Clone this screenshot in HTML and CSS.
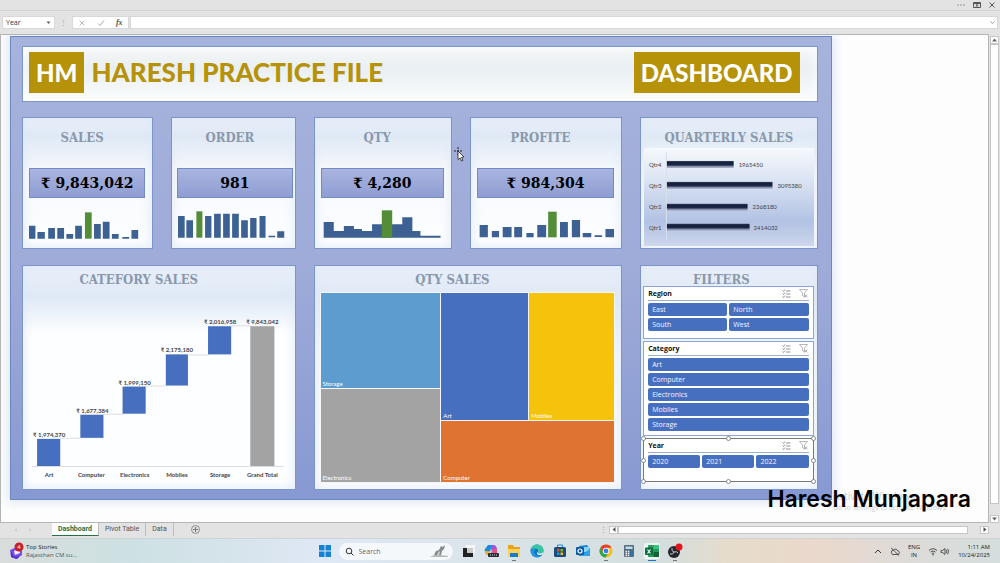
FILE: index.html
```html
<!DOCTYPE html>
<html lang="en">
<head>
<meta charset="utf-8">
<title>Dashboard</title>
<link rel="stylesheet" href="styles.css">
</head>
<body>
<svg width="0" height="0" class="defs" aria-hidden="true">
  <defs>
    <linearGradient id="qbar" x1="0" y1="0" x2="0" y2="1">
      <stop offset="0" stop-color="#4a566c"/><stop offset=".15" stop-color="#161f3b"/><stop offset=".6" stop-color="#1c2646"/><stop offset=".75" stop-color="#7c86a0"/><stop offset="1" stop-color="#a9b2c8"/>
    </linearGradient>
    <symbol id="multi" viewBox="0 0 9 9"><path d="M.5 1.5l1 1L3 .5M.5 4.5l1 1L3 3.500M.5 7.500l1 1L3 6.500M4 2h4.500M4 5h4.500M4 8h4.500" fill="none" stroke="#777" stroke-width=".8"/></symbol>
    <symbol id="clear" viewBox="0 0 9 9"><path d="M.5.5h8L5.500 4v4L3.500 6.500V4zM5.500 5.500l3 3M8.500 5.500l-3 3" fill="none" stroke="#999" stroke-width=".7"/></symbol>
  </defs>
</svg>

<header class="titlebar">
  <button class="icon-btn" aria-label="More"><svg width="10" height="8" viewBox="0 0 10 8"><path d="M1 4h2M4 4h2M7 4h2" stroke="#999"/></svg></button>
  <button class="icon-btn" aria-label="Ribbon display"><svg width="8" height="8" viewBox="0 0 8 8"><path d="M.5 1.500h7v5h-7zM.5 2.500h7M4 6V3.500M2.800 4.700L4 3.500l1.200 1.200" fill="none" stroke="#555"/></svg></button>
  <button class="icon-btn" aria-label="Close"><svg width="8" height="8" viewBox="0 0 8 8"><path d="M1.500 1.500l5 5M6.500 1.500l-5 5" stroke="#555"/></svg></button>
</header>

<div class="formula-row">
  <div class="name-box"><input aria-label="Name box" value="Year"><svg width="5" height="4" viewBox="0 0 5 4"><path d="M.5.5h4L2.500 3z" fill="#666"/></svg></div>
  <span class="grip">⋮</span>
  <div class="formula-tools">
    <button class="icon-btn" aria-label="Cancel"><svg width="8" height="8" viewBox="0 0 8 8"><path d="M1.500 1.500l5 5M6.500 1.500l-5 5" stroke="#bbb"/></svg></button>
    <button class="icon-btn" aria-label="Enter"><svg width="8" height="8" viewBox="0 0 8 8"><path d="M1 4.500l2 2L7 1.500" fill="none" stroke="#aaa"/></svg></button>
    <button class="icon-btn fx" aria-label="Insert function">fx</button>
  </div>
  <div class="formula"><input aria-label="Formula"><svg width="5" height="4" viewBox="0 0 5 4"><path d="M.5.5l2 2 2-2" fill="none" stroke="#999"/></svg></div>
</div>

<div class="workspace">
  <main class="sheet">
    <div class="board">
      <section class="banner">
        <span class="badge">HM</span>
        <h1>HARESH PRACTICE FILE</h1>
        <span class="badge badge-right">DASHBOARD</span>
      </section>

      <section class="card kpi">
        <h2>SALES</h2>
        <p class="value">₹ 9,843,042</p>
        <svg class="spark" viewBox="90 300 345 87" preserveAspectRatio="none">
          <path class="bar" d="M90 347h19v39h-19zM115 366h22v20h-22zM147 354h20v32h-20zM174 354h20v32h-20zM201 372h20v14h-20zM227 347h20v39h-20zM283 342h20v44h-20zM309 335h20v51h-20zM336 372h20v14h-20zM367 381h20v5h-20zM394 360h20v26h-20z"/>
          <path class="bar-top" d="M256 307h20v79h-20z"/>
        </svg>
      </section>
      <section class="card kpi kpi-order">
        <h2>ORDER</h2>
        <p class="value">981</p>
        <svg class="spark" viewBox="534 300 345 87" preserveAspectRatio="none">
          <path class="bar" d="M537 318h20v65h-20zM562 331h20v52h-20zM618 318h19v65h-19zM645 311h20v72h-20zM672 311h20v72h-20zM699 311h20v72h-20zM726 331h20v52h-20zM753 324h19v59h-19zM781 318h18v65h-18zM808 377h20v5h-20zM834 364h21v19h-21z"/>
          <path class="bar-top" d="M592 304h18v79h-18z"/>
        </svg>
      </section>
      <section class="card kpi">
        <h2>QTY</h2>
        <p class="value">₹ 4,280</p>
        <svg class="spark" viewBox="61 300 367 87" preserveAspectRatio="none">
          <path class="bar" d="M69 383V336h30v27h30v-15h30v9h24v6h30v-20h90v-21h30v41h24v14h60v6z"/>
          <path class="bar-top" d="M242 301h31v82h-31z"/>
        </svg>
      </section>
      <section class="card kpi">
        <h2>PROFITE</h2>
        <p class="value">₹ 984,304</p>
        <svg class="spark" viewBox="528 300 417 87" preserveAspectRatio="none">
          <path class="bar" d="M536 345h25v37h-25zM573 363h22v19h-22zM606 351h27v31h-27zM641 351h24v31h-24zM678 369h22v13h-22zM711 345h27v37h-27zM780 336h24v46h-24zM816 330h25v52h-25zM849 369h26v13h-26zM885 376h23v5h-23zM918 357h27v25h-27z"/>
          <path class="bar-top" d="M744 305h26v77h-26z"/>
        </svg>
      </section>
      <section class="card quarterly">
        <h2>QUARTERLY SALES</h2>
        <svg class="quarter-chart" viewBox="644 148 170 98">
          <path d="M666.500 152v88" stroke="#d8dfec"/>
          <g fill="url(#qbar)">
            <rect x="667" y="161" width="67" height="7"/><rect x="667" y="182" width="106" height="7"/><rect x="667" y="204" width="81" height="7"/><rect x="667" y="224" width="83" height="7"/>
          </g>
          <g class="tick">
            <text x="649" y="167">Qtr4</text><text x="649" y="188">Qtr3</text><text x="649" y="209">Qtr2</text><text x="649" y="230">Qtr1</text>
            <text x="739" y="167">1965450</text><text x="778" y="188">3095380</text><text x="753" y="209">2368180</text><text x="754" y="230">2414032</text>
          </g>
        </svg>
      </section>

      <section class="card category">
        <h2>CATEFORY SALES</h2>
        <svg class="waterfall" viewBox="24 286 270 202">
          <path d="M61 437.500h20M104 413.500h20M146 385.500h20M189 354.500h20M231 325.500h20M33 465.500h250" stroke="#ddd"/>
          <g fill="#466fbf">
            <rect x="38" y="438" width="23" height="27"/><rect x="81" y="414" width="23" height="23"/><rect x="123" y="386" width="23" height="27"/><rect x="166" y="354" width="22" height="31"/><rect x="208" y="326" width="23" height="28"/>
          </g>
          <rect x="250" y="326" width="24" height="139" fill="#a3a3a3"/>
          <g class="data-label">
            <text x="50" y="436">₹ 1,974,370</text><text x="93" y="412">₹ 1,677,384</text><text x="135" y="384">₹ 1,999,150</text><text x="177" y="352">₹ 2,175,180</text><text x="220" y="324">₹ 2,016,958</text><text x="262" y="324">₹ 9,843,042</text>
            <text x="50" y="476">Art</text><text x="92" y="476">Computer</text><text x="135" y="476">Electronics</text><text x="177" y="476">Mobiles</text><text x="220" y="476">Storage</text><text x="262" y="476">Grand Total</text>
          </g>
        </svg>
      </section>

      <section class="card qty">
        <h2>QTY SALES</h2>
        <div class="treemap">
          <div class="tile storage">Storage</div>
          <div class="tile art">Art</div>
          <div class="tile mobiles">Mobiles</div>
          <div class="tile electronics">Electronics</div>
          <div class="tile computer">Computer</div>
        </div>
      </section>

      <section class="card filters">
        <h2>FILTERS</h2>
        <div class="slicers">
          <div class="slicer region">
            <div class="slicer-head"><h3>Region</h3><button class="icon-btn" aria-label="Multi-select"><svg width="9" height="9"><use href="#multi"/></svg></button><button class="icon-btn" aria-label="Clear filter"><svg width="9" height="9"><use href="#clear"/></svg></button></div>
            <div class="options two"><button>East</button><button>North</button><button>South</button><button>West</button></div>
          </div>
          <div class="slicer cat">
            <div class="slicer-head"><h3>Category</h3><button class="icon-btn" aria-label="Multi-select"><svg width="9" height="9"><use href="#multi"/></svg></button><button class="icon-btn" aria-label="Clear filter"><svg width="9" height="9"><use href="#clear"/></svg></button></div>
            <div class="options"><button>Art</button><button>Computer</button><button>Electronics</button><button>Mobiles</button><button>Storage</button></div>
          </div>
          <div class="slicer year">
            <div class="slicer-head"><h3>Year</h3><button class="icon-btn" aria-label="Multi-select"><svg width="9" height="9"><use href="#multi"/></svg></button><button class="icon-btn" aria-label="Clear filter"><svg width="9" height="9"><use href="#clear"/></svg></button></div>
            <div class="options three"><button>2020</button><button>2021</button><button>2022</button></div>
            <i class="handle t l"></i><i class="handle t c"></i><i class="handle t r"></i><i class="handle m l"></i><i class="handle m r"></i><i class="handle b l"></i><i class="handle b c"></i><i class="handle b r"></i>
          </div>
        </div>
      </section>
      <svg class="cursor" width="12" height="15" viewBox="0 0 12 15"><path d="M4 0v8M0 4h8" stroke="#222" stroke-dasharray="2 1"/><path d="M4 4l6 6-2.500.3L9 13.500l-1.500.5-1.300-3L4 12.500z" fill="#fff" stroke="#222" stroke-width=".8"/></svg>
    </div>
    <div class="activate"><p class="activate-title">Activate Windows</p><p>Go to Settings to activate Windows.</p></div>
    <div class="signature">Haresh Munjapara</div>
  </main>
  <div class="vscroll">
    <button aria-label="Scroll up"><svg width="5" height="4" viewBox="0 0 5 4"><path d="M0 3.500h5L2.500.5z" fill="#666"/></svg></button>
    <div class="thumb"></div>
    <button aria-label="Scroll down"><svg width="5" height="4" viewBox="0 0 5 4"><path d="M0 .5h5L2.500 3.500z" fill="#666"/></svg></button>
  </div>
</div>

<nav class="tabs">
  <span class="arrows"><span>‹</span><span>›</span></span>
  <button class="tab active">Dashboard</button>
  <button class="tab">Pivot Table</button>
  <button class="tab">Data</button>
  <button class="icon-btn add" aria-label="New sheet"><svg width="9" height="9" viewBox="0 0 9 9"><path d="M4.500 2v5M2 4.500h5" stroke="#777"/><circle cx="4.500" cy="4.500" r="4" fill="none" stroke="#777" stroke-width=".8"/></svg></button>
  <div class="hscroll">
    <span class="grip">⋮</span>
    <button aria-label="Scroll left"><svg width="4" height="5" viewBox="0 0 4 5"><path d="M3.500 0v5L.5 2.500z" fill="#555"/></svg></button>
    <div class="thumb"></div>
    <button aria-label="Scroll right"><svg width="4" height="5" viewBox="0 0 4 5"><path d="M.5 0v5l3-2.500z" fill="#555"/></svg></button>
  </div>
</nav>

<footer class="taskbar">
  <div class="news">
    <svg width="16" height="18" viewBox="0 0 16 18"><path d="M1 8l7-3 5 2v6l-6 4-5-2z" fill="#7b4de0"/><path d="M5 9l5-2 1 4-5 2z" fill="#f2edff"/><path d="M2 9l3 6 6-1-3 3-6-2z" fill="#4b2fd0"/><circle cx="10" cy="5" r="4.500" fill="#c4202b"/><text x="10" y="7" class="count">4</text></svg>
    <div><p class="news-title">Top Stories</p><p>Rajasthan CM su...</p></div>
  </div>
  <div class="apps">
    <button class="icon-btn" aria-label="Start"><svg width="14" height="14" viewBox="0 0 14 14"><path d="M1 1h5.500v5.500H1zM7.500 1H13v5.500H7.500zM1 7.500h5.500V13H1zM7.500 7.500H13V13H7.500z" fill="#1583d4"/></svg></button>
    <label class="search"><svg width="9" height="9" viewBox="0 0 9 9"><circle cx="4" cy="4" r="2.800" fill="none" stroke="#333"/><path d="M6 6l2.500 2.500" stroke="#333"/></svg><input aria-label="Search" placeholder="Search"><svg width="20" height="14" viewBox="0 0 20 14"><path d="M1 13q4-3 8-2.500T19 12v1z" fill="#b7b9b8"/><path d="M5 11l2-4 3-1 2-4 1.500 1L16 1l-1 4-2 2-1 4z" fill="#858b8c"/><path d="M8 11l2-4 1 1-1 3z" fill="#d6d7d3"/></svg></label>
    <button class="icon-btn" aria-label="Task view"><svg width="16" height="16" viewBox="0 0 16 16"><path d="M6 2h9v9H6z" fill="#f4f5f5"/><path d="M3 5h4v5h6v4H3z" fill="#222"/><path d="M7 5h6v5H7z" fill="#c9cccd"/></svg></button>
    <button class="icon-btn" aria-label="Copilot"><svg width="16" height="16" viewBox="0 0 16 16"><path d="M5 2h4l-2 7H3Q1 9 2 6z" fill="#168be0"/><path d="M8 2h3q2 0 3 4l-4 3-2-3z" fill="#9a55de"/><path d="M2 8h5l-1 4H4Q2 12 2 8z" fill="#e7ae36"/><path d="M9 6h5v5H8z" fill="#e2548e"/><rect x="5" y="10" width="11" height="4" rx="1" fill="#292b30"/><path d="M7 12h7" stroke="#ddd" stroke-dasharray="1 1"/></svg></button>
    <button class="icon-btn open" aria-label="File Explorer"><svg width="16" height="16" viewBox="0 0 16 16"><path d="M2 2h5l1 2h6v10H2z" fill="#e8a317"/><path d="M2 6h12v8H2z" fill="#ffd35a"/><path d="M4 10h8v4H4z" fill="#1b79cd"/></svg></button>
    <button class="icon-btn" aria-label="Edge"><svg width="16" height="16" viewBox="0 0 16 16"><circle cx="8" cy="8" r="6.500" fill="#0f6fc5"/><path d="M1.500 7Q3 1.500 8 1.500q6 0 6.500 6-.5 3-4 3-2-.5-1.500-2 .5-2.500-2-3Q3.500 5 1.500 7z" fill="#38c5a0"/><path d="M7 6q-3 2-1 5t7 1q-3 3-6.500 2T2 9q1-4 5-3z" fill="#1a96df"/><path d="M9 8.500q-1 2 2 2 2.500 0 3.500-2-.5 3-2.500 3.500-4 .5-4-2 0-1 1-1.500z" fill="#eef8fc"/></svg></button>
    <button class="icon-btn" aria-label="Store"><svg width="16" height="16" viewBox="0 0 16 16"><path d="M5.500 4V2h5v2" fill="none" stroke="#2b8fd4"/><rect x="2" y="4" width="12" height="10" rx="1.500" fill="#204a7b"/><path d="M5 6h2.500v2.500H5z" fill="#f25022"/><path d="M8.500 6H11v2.500H8.500z" fill="#7fba00"/><path d="M5 9.500h2.500V12H5z" fill="#00a4ef"/><path d="M8.500 9.500H11V12H8.500z" fill="#ffb900"/></svg></button>
    <button class="icon-btn" aria-label="Outlook"><svg width="16" height="16" viewBox="0 0 16 16"><path d="M4 3l8-1 3 4v7H4z" fill="#1685d8"/><path d="M8 4h6v5H8z" fill="#84d5f7"/><path d="M15 6v7H5z" fill="#2f9fe6"/><rect x="1" y="4" width="8" height="8" rx="1" fill="#0c59a4"/><circle cx="5" cy="8" r="2" fill="none" stroke="#fff" stroke-width="1.200"/></svg></button>
    <button class="icon-btn open" aria-label="Chrome"><svg width="16" height="16" viewBox="0 0 16 16"><circle cx="8" cy="8" r="6.500" fill="#fbbf17"/><path d="M2.400 4.700A6.500 6.500 0 0 1 13.600 4.700H8L5.200 9.600z" fill="#e5402f"/><path d="M2.400 4.700A6.500 6.500 0 0 0 7.500 14.500L10.500 10H5.500z" fill="#2ea24d"/><circle cx="8" cy="8" r="3.200" fill="#fff"/><circle cx="8" cy="8" r="2.400" fill="#387fe8"/></svg></button>
    <button class="icon-btn" aria-label="Calculator"><svg width="16" height="16" viewBox="0 0 16 16"><rect x="3" y="2" width="10" height="12" rx="1" fill="#596a7c"/><path d="M4.500 3.500h7V6h-7z" fill="#b6e0f2"/><path d="M4.500 8.500H9M4.500 10.500H9M4.500 12.500H9" stroke="#edf1f4" stroke-width="1.300" stroke-dasharray="1.500 .8"/><path d="M9.500 8h2v5h-2z" fill="#1d76c4"/></svg></button>
    <button class="icon-btn open current" aria-label="Excel"><svg width="16" height="16" viewBox="0 0 16 16"><rect x="4" y="2" width="11" height="12" rx="1" fill="#249c5c"/><path d="M9.500 2H15v4H9.500z" fill="#3bc481"/><path d="M9.500 9H15v5H9.500z" fill="#126238"/><rect x="1" y="4.500" width="8" height="7.500" rx="1" fill="#0c7040"/><path d="M3.500 6.500l3 4M6.500 6.500l-3 4" stroke="#fff" stroke-width="1.100"/></svg></button>
    <button class="icon-btn open" aria-label="OBS"><svg width="16" height="16" viewBox="0 0 16 16"><circle cx="7" cy="9" r="6" fill="#24252a"/><path d="M7 9q-3-1-2-4M7 9q3-1 4 1M7 9q-1 3-4 2" fill="none" stroke="#c9cbd0"/><circle cx="12" cy="4" r="3.500" fill="#e3131b"/></svg></button>
  </div>
  <div class="tray">
    <svg width="8" height="6" viewBox="0 0 8 6"><path d="M1 5l3-3 3 3" fill="none" stroke="#333"/></svg>
    <svg width="10" height="9" viewBox="0 0 10 9"><path d="M3 7.500h5a1.800 1.800 0 0 0 0-3.500A3 3 0 0 0 3 3.200 2.200 2.200 0 0 0 3 7.500zM1 .8l8 7.700" fill="none" stroke="#444" stroke-width=".9"/></svg>
    <p class="lang">ENG<br>IN</p>
    <div class="status">
      <svg width="10" height="9" viewBox="0 0 10 9"><path d="M1 3.500q4-3.500 8 0M2.500 5q2.500-2 5 0M3.800 6.500q1.200-1 2.400 0" fill="none" stroke="#444" stroke-width=".9"/><circle cx="5" cy="7.700" r=".7" fill="#444"/></svg>
      <svg width="10" height="9" viewBox="0 0 10 9"><path d="M1 3.500h1.500L5 1.500v6L2.500 5.500H1zM6.300 3q1 1.500 0 3M7.600 1.800q2 2.700 0 5.400" fill="none" stroke="#444" stroke-width=".9"/></svg>
    </div>
    <p class="clock">1:11 AM<br>10/24/2025</p>
  </div>
</footer>
</body>
</html>
```
FILE: styles.css
```css
* { box-sizing: border-box; }
body {
  margin: 0;
  min-height: 100vh;
  display: flex;
  flex-direction: column;
  background: #e3e3e3;
  color: #333;
  font: 7px/9px "Open Sans", "Noto Sans", sans-serif;
}
h1, h2, h3, p { margin: 0; }
button, input { font: inherit; color: inherit; border: 0; padding: 0; margin: 0; background: none; min-width: 0; }
svg { display: block; }
.defs { position: absolute; }
.icon-btn { display: flex; align-items: center; justify-content: center; flex: none; }

.titlebar {
  display: flex;
  justify-content: flex-end;
  align-items: center;
  gap: 7px;
  height: 11px;
  padding-right: 4px;
  border-bottom: 1px solid #d3d3d3;
}
.formula-row { display: flex; align-items: stretch; height: 23px; padding: 5px 2px 5px 2px; }
.name-box { display: flex; align-items: center; width: 53px; padding: 0 3px; background: #fff; border: 1px solid #d8d8d8; }
.name-box input, .formula input { flex: 1; }
.grip { color: #999; width: 17px; text-align: center; line-height: 13px; }
.formula-tools { display: flex; align-items: center; justify-content: space-around; width: 57px; background: #fff; border: 1px solid #d8d8d8; }
.fx { font-family: "Liberation Serif", serif; font-style: italic; font-weight: bold; font-size: 8px; color: #555; }
.formula { flex: 1; display: flex; align-items: center; margin-left: 1px; padding-right: 2px; background: #fff; border: 1px solid #d8d8d8; }

.workspace { flex: 1; display: flex; }
.sheet {
  position: relative;
  flex: 1;
  padding: 1px 0 0 9px;
  overflow: hidden;
  background: #fdfdfd;
  border: 1px solid #b5b5b5;
}
.board {
  position: relative;
  width: 84%;
  display: grid;
  grid-template-columns: 131fr 124fr 138fr 152fr 177fr;
  column-gap: 18px;
  padding: 9px 13px 9px 11px;
  border: 1px solid #6d87c2;
  background: linear-gradient(#a6b3dc, #9fabd8 50%, #8799d2);
  box-shadow: 0 0 10px 2px #dbe6f3;
}
.banner {
  grid-column: 1 / -1;
  display: flex;
  align-items: center;
  gap: 7px;
  min-height: 56px;
  padding: 0 17px 3px 6px;
  margin-bottom: 15px;
  border: 1px solid #7c94cc;
  background: linear-gradient(#f4f7f9, #e9eff3 40%, #fafcfc);
  box-shadow: inset 0 0 12px #fff;
  color: #b69208;
  font: 900 26px/41px Lato, sans-serif;
}
h1 { font: inherit; white-space: nowrap; }
.badge { background: #b69208; color: #fff; padding: 0 7px; font-size: 24px; }
.badge-right { margin-left: auto; }

.card {
  display: flex;
  flex-direction: column;
  min-width: 0;
  border: 1px solid #7c94cc;
  background: linear-gradient(#e9effa, #dfe9f5 14%, #f6f9fd 40%, #fdfeff);
  box-shadow: inset 0 0 12px #dfe9f7;
}
h2 { color: #8998ab; font: bold 13px/12px "DejaVu Serif Condensed", "DejaVu Serif", serif; text-align: center; padding-top: 8px; white-space: nowrap; }
.kpi, .quarterly { margin-bottom: 16px; }
.kpi { padding: 0 7px 9px 6px; }
.kpi-order { padding-right: 2px; padding-left: 5px; }
.kpi h2 { padding: 14px 10px 0 0; }
.value {
  margin: 24px 0 12px;
  border: 1px solid #7089c7;
  background: linear-gradient(#a9b4df, #8f9dd2);
  color: #000;
  font: bold 14px/28px "DejaVu Serif", serif;
  text-align: center;
  white-space: nowrap;
}
.spark { width: 100%; height: 29px; }
.bar { fill: #3c6192; }
.bar-top { fill: #538d38; }

.quarterly { padding: 0 3px 1px; }
.quarterly h2 { padding-top: 14px; }
.quarter-chart { width: 100%; margin-top: 4px; background: linear-gradient(#f6f9fc, #dde6f4 30%, #b2c2e3 75%, #cdd7ec); }
.tick { font: 6px Lato, sans-serif; fill: #444; }

.category, .qty { grid-column: span 2; }
.category h2 { padding-right: 40px; }
.category { background: linear-gradient(#e9effa, #dfe9f5 14%, #fdfeff 30%); }
.waterfall { width: 100%; }
.data-label { font: bold 6px Lato, "Open Sans", sans-serif; fill: #444; text-anchor: middle; }

.qty { padding: 0 6px 6px 5px; }
.qty h2 { padding-right: 30px; }
.treemap {
  flex: 1;
  margin-top: 6px;
  display: grid;
  grid-template-columns: 120fr 87fr 85fr;
  grid-template-rows: 95fr 32fr 61fr;
  gap: 1px;
  background: #f4f6fa;
  border: 1px solid #f4f6fa;
}
.tile { display: flex; align-items: flex-end; padding: 0 2px; color: #fff; font: 6px/9px Lato, sans-serif; }
.storage { background: #5c9ccf; }
.art { background: #466fbf; grid-row: span 2; }
.mobiles { background: #f5c30c; grid-row: span 2; }
.electronics { background: #a3a3a3; grid-row: span 2; }
.computer { background: #df7432; grid-column: span 2; }

.filters { padding: 0 3px 7px 2px; }
.filters h2 { padding-right: 14px; }
.slicers { display: flex; flex-direction: column; gap: 2px; }
.slicer { position: relative; padding: 0 4px; background: #fff; border: 1px solid #8aa5d6; }
.slicer-head { display: flex; align-items: center; gap: 8px; height: 14px; padding-right: 1px; border-bottom: 1px solid #9ab0cd; }
h3 { flex: 1; color: #111; font: bold 7px/12px "Open Sans", sans-serif; }
.options { display: grid; gap: 2px; padding-top: 2px; }
.two { grid-template-columns: 1fr 1fr; }
.three { grid-template-columns: 1fr 1fr 1fr; }
.options button { height: 13px; padding: 0 4px; text-align: left; border-radius: 2px; background: #466fbf; color: #f2f6ff; line-height: 13px; }
.region { padding-bottom: 7px; }
.cat { padding-bottom: 4px; }
.year { padding-bottom: 13px; border-color: #777; }
.handle { position: absolute; width: 5px; height: 5px; border: 1px solid #888; border-radius: 50%; background: #fff; }
.t { top: -3px; }
.m { top: calc(50% - 2px); }
.b { bottom: -3px; }
.l { left: -3px; }
.c { left: calc(50% - 2px); }
.r { right: -3px; }
.cursor { position: absolute; left: 54%; top: 110px; }

.activate { position: absolute; right: 34px; bottom: 10px; width: 121px; color: #ccc; white-space: nowrap; }
.activate-title { font-size: 10px; line-height: 13px; }
.signature { position: absolute; right: 17px; bottom: 8px; color: #000; font: 600 23px/29px Inter, sans-serif; white-space: nowrap; }

.vscroll { width: 11px; display: flex; flex-direction: column; padding: 2px 1px 0; }
.vscroll button, .hscroll button { display: flex; align-items: center; justify-content: center; flex: none; width: 9px; height: 8px; background: #fff; border: 1px solid #c6c6c6; }
.thumb { flex: 1; background: #fff; border: 1px solid #c6c6c6; }
.vscroll .thumb { margin-bottom: 11px; }

.tabs { display: flex; height: 15px; color: #555; }
.arrows { display: flex; justify-content: center; gap: 12px; width: 52px; color: #aaa; line-height: 13px; padding-right: 6px; }
.tab { height: 13px; padding: 0 6px; border-right: 1px solid #bbb; font-family: Roboto, sans-serif; }
.active { background: #fff; border-bottom: 1px solid #217346; color: #217346; font-weight: bold; }
.add { margin-left: 17px; height: 13px; }
.hscroll { display: flex; align-items: center; width: 40%; height: 13px; margin-left: auto; padding-right: 11px; }
.hscroll .thumb { height: 8px; margin-right: 12px; }
.hscroll .grip { width: 9px; padding-right: 6px; }

.taskbar {
  display: grid;
  grid-template-columns: 1fr auto 1fr;
  align-items: center;
  height: 25px;
  border-top: 1px solid #cfd3d3;
  background: linear-gradient(90deg, #d9dddb, #cde1e3 13%, #d5e3ea 22%, #dfe8f5 32%, #dbe5ec 45%, #d3dede 66%, #e6dccb 73%, #ead8cc 82%, #dedbd8 90%, #d4dedd);
}
.news { display: flex; align-items: center; gap: 1px; padding-left: 9px; color: #555; font-size: 6px; line-height: 8px; }
.news-title { color: #222; font-size: 6px; }
.count { fill: #fff; font-size: 6px; text-anchor: middle; }
.apps { display: flex; align-items: center; gap: 7px; }
.search { display: flex; align-items: center; gap: 5px; width: 114px; height: 17px; padding: 0 4px 0 6px; border-radius: 9px; background: #f5f8fa; }
.search input { flex: 1; }
.search input::placeholder { color: #666; opacity: 1; }
.open { position: relative; }
.open::after { content: ""; position: absolute; bottom: -2px; width: 4px; height: 1px; background: #777; }
.current { background: #eef3f1; border-radius: 2px; }
.current::after { width: 8px; background: #1a73c9; }
.tray { display: flex; align-items: center; justify-content: flex-end; gap: 8px; padding-right: 10px; color: #222; font-size: 6px; line-height: 8px; }
.status { display: flex; gap: 2px; }
.lang { text-align: center; }
.clock { text-align: right; }
```
